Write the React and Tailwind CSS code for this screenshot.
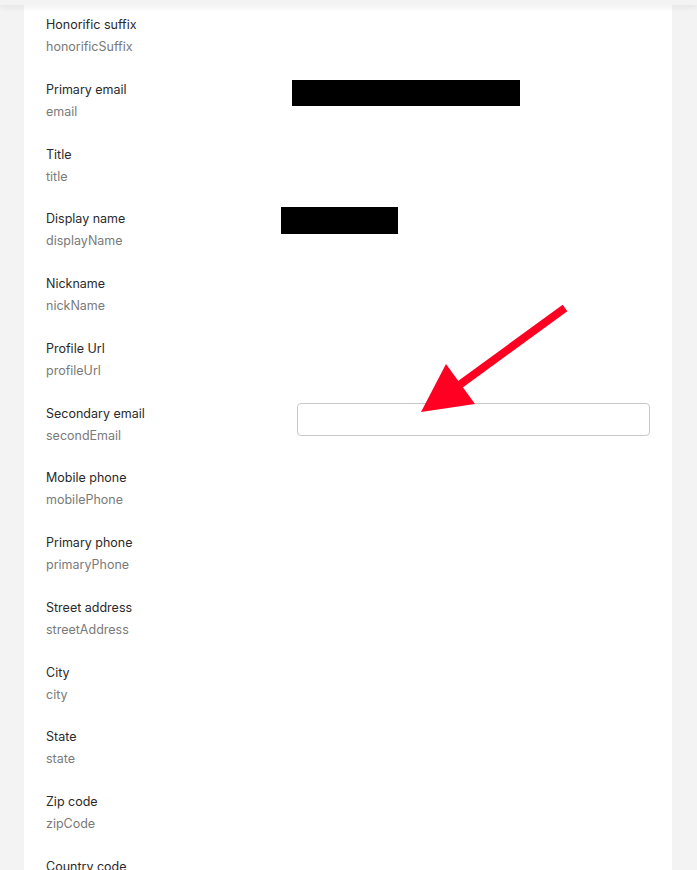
const FIELDS = [
  { label: "Honorific suffix", name: "honorificSuffix" },
  { label: "Primary email", name: "email", redact: "w-[228px] h-[26px] -ml-[5px]" },
  { label: "Title", name: "title" },
  { label: "Display name", name: "displayName", redact: "w-[117px] h-[27px] -ml-[16px] -mt-[2px]" },
  { label: "Nickname", name: "nickName" },
  { label: "Profile Url", name: "profileUrl" },
  { label: "Secondary email", name: "secondEmail", input: true },
  { label: "Mobile phone", name: "mobilePhone" },
  { label: "Primary phone", name: "primaryPhone" },
  { label: "Street address", name: "streetAddress" },
  { label: "City", name: "city" },
  { label: "State", name: "state" },
  { label: "Zip code", name: "zipCode" },
  { label: "Country code", name: "countryCode" },
  { label: "Locale", name: "locale" },
];

function FieldRow({ field }) {
  return (
    <div className="h-[64.77px] flex">
      <div className="w-[251px] shrink-0">
        <div className="text-[12.5px] leading-5 text-[#2a2a2a]">{field.label}</div>
        <div className="mt-0.5 text-[12.5px] leading-5 text-[#7a7a7a]">{field.name}</div>
      </div>
      <div className="flex-1">
        {field.redact && <div className={`bg-black ${field.redact}`} />}
        {field.input && (
          <input
            type="text"
            className="w-full h-[33px] -mt-px rounded border border-[#c8c8c8] bg-white px-3 text-[13px] outline-none"
          />
        )}
      </div>
    </div>
  );
}

function Arrow() {
  return (
    <svg
      className="absolute left-0 top-0 pointer-events-none"
      width="697"
      height="870"
      viewBox="0 0 697 870"
    >
      <line x1="565" y1="308" x2="458" y2="386" stroke="#ff0022" strokeWidth="8" />
      <polygon points="421,412 446,364 475,404" fill="#ff0022" />
    </svg>
  );
}

export default function App() {
  return (
    <div
      className="relative min-h-screen bg-[#f3f3f3] overflow-hidden"
      style={{ fontFamily: "Inter, 'Noto Sans', sans-serif" }}
    >
      <div className="absolute left-0 right-0 top-0 h-[5px] bg-[#f3f3f3] shadow-[0_2px_6px_rgba(0,0,0,0.08)] z-10" />
      <div className="ml-6 w-[648px] bg-white pt-[15px] pl-[22px] pr-[22px]">
        {FIELDS.map((f) => (
          <FieldRow key={f.name} field={f} />
        ))}
      </div>
      <Arrow />
    </div>
  );
}
